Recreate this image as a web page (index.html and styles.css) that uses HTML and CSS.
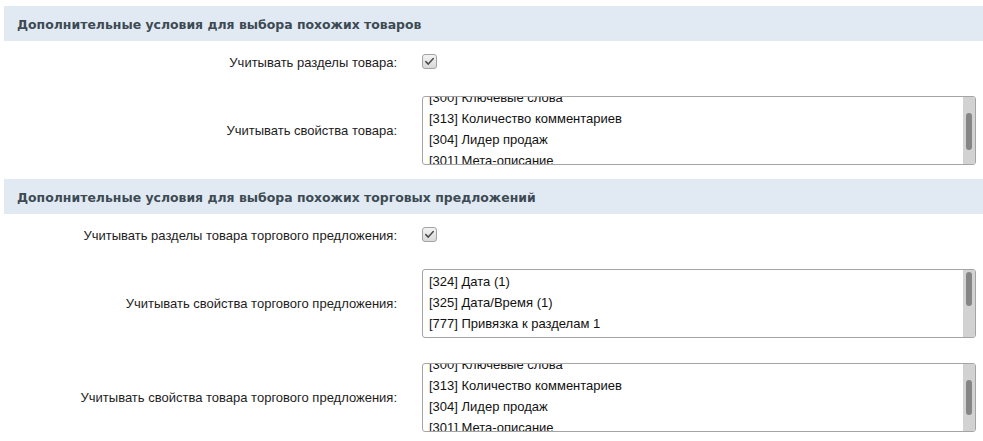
FILE: index.html
```html
<!DOCTYPE html>
<html lang="ru">
<head>
<meta charset="utf-8">
<title>Дополнительные условия</title>
<link rel="stylesheet" href="styles.css">
</head>
<body>
<div class="page">
  <div class="section-head">Дополнительные условия для выбора похожих товаров</div>
  <div class="row row-check">
    <div class="label">Учитывать разделы товара:</div>
    <div class="control"><span class="checkbox"><svg viewBox="0 0 15 15" width="15" height="15"><path d="M3.8 7.6 L6.3 10.1 L11.3 4.6" fill="none" stroke="#4a4a4a" stroke-width="1.5" stroke-linecap="round" stroke-linejoin="round"/></svg></span></div>
  </div>
  <div class="row">
    <div class="label">Учитывать свойства товара:</div>
    <div class="control">
      <div class="listbox">
        <div class="list-view"><div class="list-items scrolled">
          <div class="opt">[300] Ключевые слова</div>
          <div class="opt">[313] Количество комментариев</div>
          <div class="opt">[304] Лидер продаж</div>
          <div class="opt">[301] Мета-описание</div>
        </div></div>
        <div class="scrollbar"><div class="thumb" style="margin-top:16px;height:37px"></div></div>
      </div>
    </div>
  </div>
  <div class="section-head">Дополнительные условия для выбора похожих торговых предложений</div>
  <div class="row row-check">
    <div class="label">Учитывать разделы товара торгового предложения:</div>
    <div class="control"><span class="checkbox"><svg viewBox="0 0 15 15" width="15" height="15"><path d="M3.8 7.6 L6.3 10.1 L11.3 4.6" fill="none" stroke="#4a4a4a" stroke-width="1.5" stroke-linecap="round" stroke-linejoin="round"/></svg></span></div>
  </div>
  <div class="row">
    <div class="label">Учитывать свойства торгового предложения:</div>
    <div class="control">
      <div class="listbox">
        <div class="list-view"><div class="list-items">
          <div class="opt">[324] Дата (1)</div>
          <div class="opt">[325] Дата/Время (1)</div>
          <div class="opt">[777] Привязка к разделам 1</div>
        </div></div>
        <div class="scrollbar"><div class="thumb" style="margin-top:2px;height:34px"></div></div>
      </div>
    </div>
  </div>
  <div class="row">
    <div class="label">Учитывать свойства товара торгового предложения:</div>
    <div class="control">
      <div class="listbox">
        <div class="list-view"><div class="list-items scrolled">
          <div class="opt">[300] Ключевые слова</div>
          <div class="opt">[313] Количество комментариев</div>
          <div class="opt">[304] Лидер продаж</div>
          <div class="opt">[301] Мета-описание</div>
        </div></div>
        <div class="scrollbar"><div class="thumb" style="margin-top:16px;height:35px"></div></div>
      </div>
    </div>
  </div>
</div>
</body>
</html>
```
FILE: styles.css
```css
html, body {
  margin: 0;
  padding: 0;
  background: #ffffff;
}
body {
  font-family: "Liberation Sans", Arial, sans-serif;
  font-size: 13px;
  color: #000;
}
.page {
  padding: 4px 0 0 4px;
}
.section-head {
  margin-top: 2px;
  height: 35px;
  box-sizing: border-box;
  background: #e1eaf3;
  padding: 1px 0 0 13px;
  display: flex;
  align-items: center;
  font-family: "DejaVu Sans", sans-serif;
  font-weight: bold;
  font-size: 12.45px;
  color: #3d4a53;
}
.row {
  display: grid;
  grid-template-columns: 393px 1fr;
  column-gap: 25px;
  align-items: center;
  padding: 13px 7px 12px 0;
}
.row-check {
  padding-bottom: 13px;
}
.label {
  text-align: right;
  color: #1d1d1d;
}
.control {
  display: flex;
  align-items: center;
}
.checkbox {
  display: block;
  width: 15px;
  height: 15px;
  margin: 0 0 1px 0;
  box-sizing: border-box;
  border: 1px solid #a3a3a3;
  border-radius: 3px;
  background: linear-gradient(#f3f3f3, #d9d9d9);
  overflow: hidden;
}
.checkbox svg {
  display: block;
  margin: -1px;
}
.listbox {
  flex: 1;
  height: 69px;
  box-sizing: border-box;
  border: 1px solid #a4a4a4;
  border-radius: 3px;
  display: flex;
  overflow: hidden;
  background: #fff;
}
.list-view {
  flex: 1;
  overflow: hidden;
  padding: 1px 6px 0;
}
.list-items.scrolled {
  margin-top: -11px;
}
.opt {
  line-height: 21px;
  height: 21px;
  white-space: nowrap;
  font-size: 13px;
  color: #111;
}
.scrollbar {
  width: 12px;
  background: #d2d2d2;
  flex: none;
}
.thumb {
  width: 6px;
  margin-left: 3px;
  border-radius: 3px;
  background: #858585;
}
```
